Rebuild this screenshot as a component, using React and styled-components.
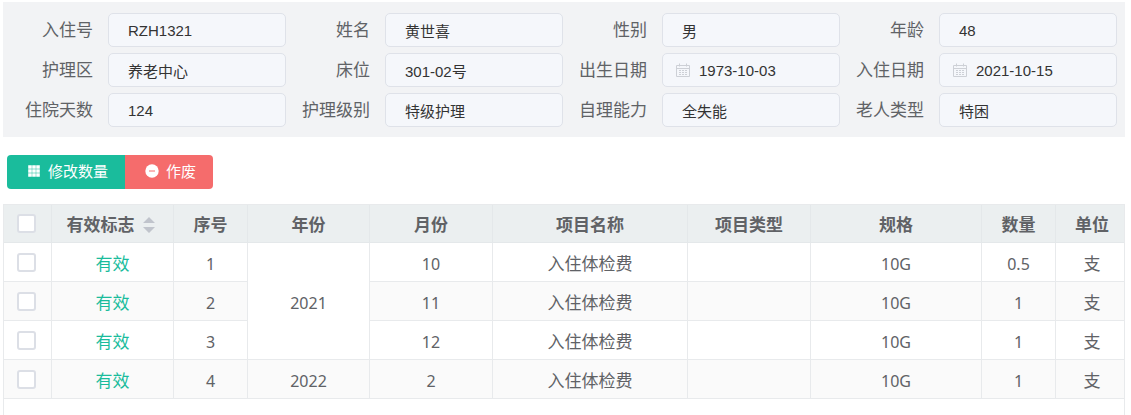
import React from "react";
import styled, { createGlobalStyle } from "styled-components";

const fields = [
  { id: "admissionNo", label: "入住号", value: "RZH1321" },
  { id: "name", label: "姓名", value: "黄世喜" },
  { id: "gender", label: "性别", value: "男" },
  { id: "age", label: "年龄", value: "48" },
  { id: "area", label: "护理区", value: "养老中心" },
  { id: "bed", label: "床位", value: "301-02号" },
  { id: "birthday", label: "出生日期", value: "1973-10-03", date: true },
  { id: "checkIn", label: "入住日期", value: "2021-10-15", date: true },
  { id: "days", label: "住院天数", value: "124" },
  { id: "level", label: "护理级别", value: "特级护理" },
  { id: "ability", label: "自理能力", value: "全失能" },
  { id: "type", label: "老人类型", value: "特困" },
];

const columnWidths = [48, 122, 74, 122, 123, 195, 123, 171, 74, 68];

const rows = [
  { no: 1, year: 2021, yearSpan: 3, month: 10, count: "0.5" },
  { no: 2, month: 11, count: "1" },
  { no: 3, month: 12, count: "1" },
  { no: 4, year: 2022, yearSpan: 1, month: 2, count: "1" },
];

const totalWidth = columnWidths.reduce((sum, w) => sum + w, 0);

const CalendarIcon = () => (
  <DateIcon viewBox="0 0 14 14" aria-hidden="true">
    <path
      d="M0.5 2.5h13v11h-13zM0.5 5.5h13M3.5 0.5v3M10.5 0.5v3"
      fill="none"
      stroke="currentColor"
    />
    <path
      d="M3 7.5h2M6 7.5h2M9 7.5h2M3 9.5h2M6 9.5h2M9 9.5h2M3 11.5h2M6 11.5h2M9 11.5h2"
      stroke="currentColor"
    />
  </DateIcon>
);

const GridIcon = () => (
  <ButtonIcon viewBox="0 0 14 14" aria-hidden="true">
    <path d="M1.2 1.2h3.6v3.6h-3.6zM5.2 1.2h3.6v3.6h-3.6zM9.2 1.2h3.6v3.6h-3.6zM1.2 5.2h3.6v3.6h-3.6zM5.2 5.2h3.6v3.6h-3.6zM9.2 5.2h3.6v3.6h-3.6zM1.2 9.2h3.6v3.6h-3.6zM5.2 9.2h3.6v3.6h-3.6zM9.2 9.2h3.6v3.6h-3.6z" />
  </ButtonIcon>
);

const RemoveIcon = () => (
  <ButtonIcon viewBox="0 0 14 14" aria-hidden="true">
    <circle cx="7" cy="7" r="6.7" />
    <path d="M4 7h6" stroke="#f56c6c" strokeWidth="1" />
  </ButtonIcon>
);

const App = () => {
  return (
    <Page>
      <GlobalStyle />
      <InfoForm>
        {fields.map((field) => (
          <Field key={field.id}>
            <Label htmlFor={field.id}>{field.label}</Label>
            <InputBox>
              {field.date && <CalendarIcon />}
              <Input id={field.id} defaultValue={field.value} readOnly />
            </InputBox>
          </Field>
        ))}
      </InfoForm>

      <Toolbar>
        <Button type="button">
          <GridIcon />
          修改数量
        </Button>
        <Button type="button" $danger>
          <RemoveIcon />
          作废
        </Button>
      </Toolbar>

      <TableBox>
        <Table>
          <colgroup>
            {columnWidths.map((w, i) => (
              <col key={i} style={{ width: `${(w / totalWidth) * 100}%` }} />
            ))}
          </colgroup>
          <thead>
            <tr>
              <Th>
                <Checkbox type="checkbox" aria-label="全选" />
              </Th>
              <Th>
                <SortButton type="button">
                  有效标志
                  <Caret viewBox="0 0 12 16" aria-hidden="true">
                    <path d="M0 6L6 0L12 6zM0 10L6 16L12 10z" />
                  </Caret>
                </SortButton>
              </Th>
              <Th>序号</Th>
              <Th>年份</Th>
              <Th>月份</Th>
              <Th>项目名称</Th>
              <Th>项目类型</Th>
              <Th>规格</Th>
              <Th>数量</Th>
              <Th>单位</Th>
            </tr>
          </thead>
          <tbody>
            {rows.map((row) => (
              <Row key={row.no}>
                <Td>
                  <Checkbox type="checkbox" aria-label={`选择 ${row.no}`} />
                </Td>
                <Td $valid>有效</Td>
                <NumberTd>{row.no}</NumberTd>
                {row.year && (
                  <NumberTd rowSpan={row.yearSpan}>{row.year}</NumberTd>
                )}
                <NumberTd>{row.month}</NumberTd>
                <Td>入住体检费</Td>
                <Td />
                <NumberTd>10G</NumberTd>
                <NumberTd>{row.count}</NumberTd>
                <Td>支</Td>
              </Row>
            ))}
          </tbody>
        </Table>
      </TableBox>
    </Page>
  );
};

export default App;

const GlobalStyle = createGlobalStyle`
  * {
    box-sizing: border-box;
  }
  body {
    margin: 0;
    background: #fff;
    color: #606266;
    font-family: "Noto Sans", "Noto Sans CJK SC", sans-serif;
  }
`;

const Page = styled.div`
  display: flex;
  flex-direction: column;
  min-height: 100vh;
  padding: 2px 6px 0 3px;
`;

const InfoForm = styled.form`
  display: grid;
  grid-template-columns: repeat(4, minmax(0, 1fr));
  row-gap: 6px;
  padding: 11px 8px 10px 6px;
  background: #f2f3f5;
`;

const Field = styled.div`
  display: flex;
  align-items: center;
`;

const Label = styled.label`
  flex: none;
  width: 99px;
  padding-right: 15px;
  font-size: 17px;
  line-height: 34px;
  text-align: right;
  white-space: nowrap;
`;

const InputBox = styled.div`
  display: flex;
  flex: 1;
  align-items: center;
  gap: 9px;
  min-width: 0;
  height: 34px;
  padding: 0 14px 0 13px;
  border: 1px solid #dfe2e9;
  border-radius: 5px;
  background: #f5f7fb;
`;

const Input = styled.input`
  flex: 1;
  width: 100%;
  min-width: 0;
  height: 32px;
  padding: 0;
  border: 0;
  outline: none;
  background: transparent;
  color: #333;
  font-family: "Liberation Sans", "Noto Sans CJK SC", sans-serif;
  font-size: 15px;

  &:first-child {
    padding-left: 6px;
  }
`;

const DateIcon = styled.svg`
  flex: none;
  width: 14px;
  height: 14px;
  color: #cdd0d6;
`;

const Toolbar = styled.div`
  display: flex;
  margin: 18px 0 15px 4px;
`;

const Button = styled.button`
  display: flex;
  align-items: center;
  gap: 7px;
  height: 34px;
  padding: 0 17px 3px 20px;
  border: 0;
  border-radius: ${(props) => (props.$danger ? "0 4px 4px 0" : "4px 0 0 4px")};
  background: ${(props) => (props.$danger ? "#f56c6c" : "#1abc9c")};
  color: #fff;
  font-family: inherit;
  font-size: 15px;
  cursor: pointer;
`;

const ButtonIcon = styled.svg`
  width: 14px;
  height: 14px;
  fill: currentColor;
`;

const TableBox = styled.div`
  flex: 1;
  border: 1px solid #e8eaec;
  border-bottom: 0;
`;

const Table = styled.table`
  width: 100%;
  border-collapse: separate;
  border-spacing: 0;
  table-layout: fixed;
`;

const Td = styled.td`
  height: 39px;
  padding: 3px 0 0;
  border-right: 1px solid #e8eaec;
  border-bottom: 1px solid #e8eaec;
  color: ${(props) => (props.$valid ? "#1abc9c" : "#606266")};
  font-size: 17px;
  line-height: 24px;
  text-align: center;

  &:first-child {
    padding: 0 3px 0 0;
  }

  &:last-child {
    padding-left: 4px;
    border-right: 0;
  }
`;

const NumberTd = styled(Td)`
  font-size: 16px;

  &[rowspan="3"] {
    background: #fff;
  }
`;

const Th = styled.th`
  height: 38px;
  padding: 2px 0 0;
  border-right: 1px solid #e4e8ea;
  border-bottom: 1px solid #e4e8ea;
  background: #ebeff0;
  font-size: 17px;
  font-weight: 700;
  line-height: 24px;

  &:first-child {
    padding: 0 2px 0 0;
  }

  &:nth-child(2) {
    padding-right: 4px;
  }

  &:last-child {
    padding-left: 4px;
    border-right: 0;
  }
`;

const Row = styled.tr`
  &:nth-child(even) {
    background: #fafafa;
  }
`;

const SortButton = styled.button`
  display: inline-flex;
  align-items: center;
  gap: 8px;
  padding: 0;
  border: 0;
  background: none;
  color: inherit;
  font: inherit;
  vertical-align: top;
  cursor: pointer;
`;

const Caret = styled.svg`
  width: 12px;
  height: 16px;
  fill: #c0c4cc;
`;

const Checkbox = styled.input`
  display: block;
  width: 19px;
  height: 19px;
  margin: 0 auto;
  border: 2px solid #dcdfe6;
  border-radius: 3px;
  background: #fff;
  appearance: none;
  cursor: pointer;

  &:checked {
    border-color: #1abc9c;
    background: #1abc9c;
  }
`;
